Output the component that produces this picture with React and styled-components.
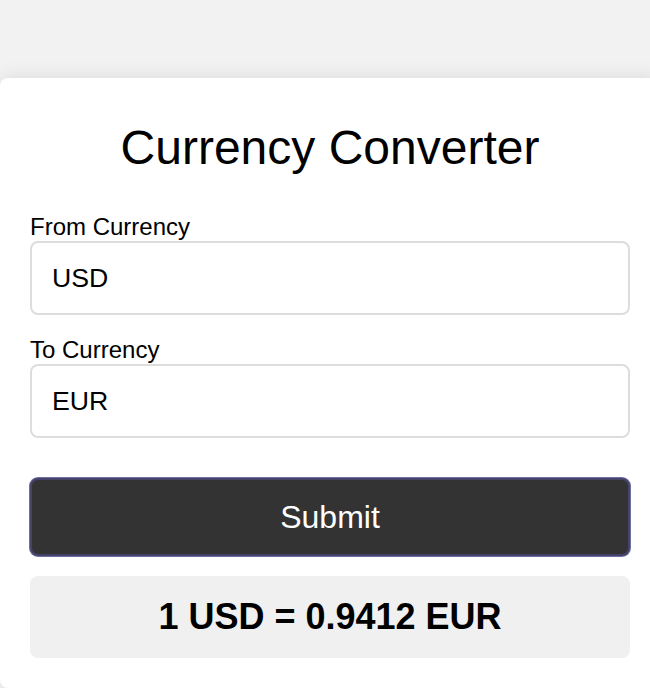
import React, { useState } from 'react';
import styled, { createGlobalStyle } from 'styled-components';

const GlobalStyle = createGlobalStyle`
  html, body {
    margin: 0;
    padding: 0;
    overflow: hidden;
    background: #f2f2f2;
    font-family: "Liberation Sans", Arial, sans-serif;
  }
`;

function App() {
  const [from, setFrom] = useState('USD');
  const [to, setTo] = useState('EUR');

  return (
    <Page>
      <GlobalStyle />
      <Card>
        <Title>Currency Converter</Title>

        <Label htmlFor="from">From Currency</Label>
        <Input id="from" value={from} onChange={(e) => setFrom(e.target.value)} />

        <Label htmlFor="to">To Currency</Label>
        <Input id="to" value={to} onChange={(e) => setTo(e.target.value)} />

        <SubmitButton type="button">Submit</SubmitButton>

        <Result>1 {from} = 0.9412 {to}</Result>
      </Card>
    </Page>
  );
}

export default App;

const Page = styled.div`
  padding-top: 78px;
  width: 660px;
`;

const Card = styled.div`
  background: #fff;
  width: 660px;
  box-sizing: border-box;
  padding: 42px 30px 30px;
  border-radius: 8px;
  box-shadow: 0 0 20px rgba(0, 0, 0, 0.1);
  display: flex;
  flex-direction: column;
`;

const Title = styled.h1`
  margin: 0 0 38px;
  font-size: 48px;
  font-weight: normal;
  text-align: center;
  color: #000;
`;

const Label = styled.label`
  display: block;
  font-size: 24px;
  color: #000;
`;

const Input = styled.input`
  height: 74px;
  box-sizing: border-box;
  margin: 0 0 21px;
  padding: 0 20px;
  border: 2px solid #ddd;
  border-radius: 8px;
  font-family: "Liberation Sans", Arial, sans-serif;
  font-size: 26.67px;
  color: #000;
  outline: none;
`;

const SubmitButton = styled.button`
  margin-top: 19px;
  height: 78px;
  border: 2px solid #44446a;
  box-shadow: 0 0 0 1px #7070a0;
  border-radius: 8px;
  background: #333;
  color: #fff;
  font-family: "Liberation Sans", Arial, sans-serif;
  font-size: 32px;
  cursor: pointer;
`;

const Result = styled.div`
  margin-top: 20px;
  padding: 20px;
  background: #f0f0f0;
  border-radius: 8px;
  text-align: center;
  font-size: 36px;
  font-weight: bold;
  color: #000;
`;
